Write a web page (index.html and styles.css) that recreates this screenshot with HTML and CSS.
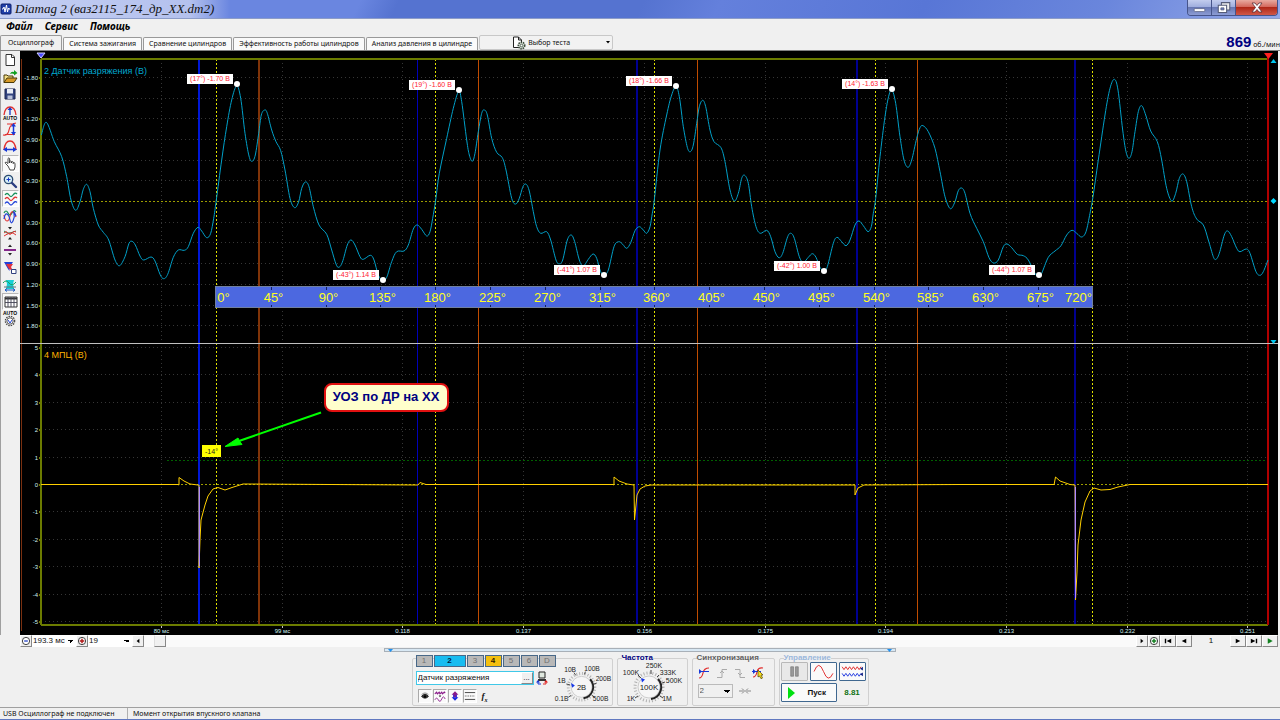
FILE: index.html
```html
<!DOCTYPE html>
<html lang="ru">
<head>
    <meta charset="UTF-8">
    <meta name="viewport" content="width=device-width, initial-scale=1.0">
    <title>Diamag 2</title>
    <link rel="stylesheet" href="styles.css">
</head>
<body>
<header class="titlebar">
    <svg class="app-icon" viewBox="0 0 12 12">
        <rect x="1" y="1" width="10" height="10" rx="1" fill="#1f3fa8" stroke="#0c1f6c"/>
        <path d="M2 6h1l1-2 1 5 1.500-7 1 7 1-4 .5 1h1" fill="none" stroke="#fff"/>
    </svg>
    <h1 class="title">Diamag 2 (ваз2115_174_др_ХХ.dm2)</h1>
    <div class="window-buttons">
        <button class="win-btn" aria-label="Свернуть"><svg viewBox="0 0 24 15"><rect x="6.500" y="9" width="11" height="3" rx="1" fill="#fff" stroke="#555c78" stroke-width=".7"/></svg></button>
        <button class="win-btn win-max" aria-label="Развернуть"><svg viewBox="0 0 22 15"><path d="M9 2.500h8v7h-8z" fill="#eee" stroke="#555c78"/><path d="M6 5h8v7H6z" fill="#fff" stroke="#555c78"/><path d="M8.500 7.500h3v2h-3z" fill="#6d7fc0" stroke="#555c78" stroke-width=".7"/></svg></button>
        <button class="win-btn win-close" aria-label="Закрыть"><svg viewBox="0 0 41 15"><path d="M16 3h3l2 2.500L23 3h3l-3.500 4.500L26 12h-3l-2-2.500L19 12h-3l3.500-4.500z" fill="#fff" stroke="#5a3038" stroke-width=".8"/></svg></button>
    </div>
</header>

<nav class="menubar">
    <a href="#">Файл</a>
    <a href="#">Сервис</a>
    <a href="#">Помощь</a>
</nav>

<div class="tabs">
    <button class="tab tab-active">Осциллограф</button>
    <button class="tab">Система зажигания</button>
    <button class="tab">Сравнение цилиндров</button>
    <button class="tab">Эффективность работы цилиндров</button>
    <button class="tab">Анализ давления в цилиндре</button>
    <button class="test-btn">
        <svg class="test-icon" viewBox="0 0 14 14">
            <path d="M1.500 1h5l3 3v7.500h-8z" fill="#fff" stroke="#222"/>
            <path d="M6.500 1v3h3" fill="none" stroke="#222"/>
            <circle cx="9.500" cy="9.500" r="3.200" fill="#d5e0d5" stroke="#3c4a3c" stroke-width="1.600" stroke-dasharray="1.500 .8"/>
            <circle cx="9.500" cy="9.500" r="1.300" fill="#fff" stroke="#3c4a3c" stroke-width=".8"/>
        </svg>
        <span>Выбор теста</span>
        <svg class="caret" viewBox="0 0 4 3"><path d="M0 0h4L2 2.500z"/></svg>
    </button>
    <p class="rpm"><strong>869</strong> об./мин</p>
</div>

<main class="workspace">
    <aside class="toolbar">
        <div class="tool-group">
            <button class="tool" aria-label="Новый"><svg viewBox="0 0 16 16"><path d="M4 2.500h6L12.500 5v8.500H4z" fill="#fff" stroke="#333"/><path d="M9.500 2.500v3h3" fill="none" stroke="#333"/></svg></button>
            <button class="tool" aria-label="Открыть"><svg viewBox="0 0 16 16"><path d="M2 13.500V6h3l1 1h5v2" fill="#f4e08a" stroke="#4a3a08"/><path d="M2 13.500L5 9h10l-3 4.500z" fill="#d79a28" stroke="#4a3a08"/><path d="M8 5q1-3 4-2V1l3.500 3L12 6.500V5q-2-1-4 0z" fill="#10a020"/></svg></button>
            <button class="tool" aria-label="Сохранить"><svg viewBox="0 0 16 16"><path d="M3 3h10v10H3z" fill="#31427e" stroke="#1a2450"/><path d="M5 3h6v4.500H5z" fill="#e8ecf5"/><path d="M5.500 9.500h5V13h-5z" fill="#b8c0d8"/></svg></button>
        </div>
        <div class="tool-group">
            <button class="tool" aria-label="Автомасштаб"><svg viewBox="0 0 16 16"><path d="M2 11Q3 3 8 3t6 8" fill="none" stroke="#e23030" stroke-width="1.300"/><path d="M8 5v6" stroke="#1838c8" stroke-width="1.300"/><path d="M5.500 6L8 3l2.500 3z" fill="#1838c8"/><text x="8" y="15.500" class="tiny-label">AUTO</text></svg></button>
            <button class="tool" aria-label="Масштаб по вертикали"><svg viewBox="0 0 16 16"><path d="M1 14q5 1 6-5t7-7M5 3h6M3 13.500h10" fill="none" stroke="#e23030" stroke-width="1.200"/><path d="M11.500 4v8" stroke="#1838d8" stroke-width="1.500"/><path d="M9 5.500L11.500 2 14 5.500zM9 11l2.500 3.500L14 11z" fill="#1838d8"/></svg></button>
            <button class="tool" aria-label="Масштаб по горизонтали"><svg viewBox="0 0 16 16"><path d="M2 12Q3 3 8 3t6 9" fill="none" stroke="#e23030" stroke-width="1.400"/><path d="M4 11.500h8" stroke="#1838d8" stroke-width="1.500"/><path d="M5 9l-4 2.500L5 14zM11 9l4 2.500-4 2.500z" fill="#1838d8"/></svg></button>
        </div>
        <div class="tool-group">
            <button class="tool tool-pressed" aria-label="Рука"><svg viewBox="0 0 16 16"><path d="M5 10L2.500 7.500q-1-1.500.7-1.300L5 7.500V2.500q.8-1.200 1.600 0V7V5.500q1-1 1.800 0V7V6q1-1 1.800 0v1.500V7q1-.8 1.800.3V11l-1 3H7z" fill="#fff" stroke="#333" stroke-width=".9"/></svg></button>
            <button class="tool" aria-label="Лупа"><svg viewBox="0 0 16 16"><circle cx="6.500" cy="6.500" r="4.200" fill="#d8f0f8" stroke="#2a4a70" stroke-width="1.300"/><path d="M6.500 4.500v4M4.500 6.500h4" stroke="#1838c8"/><path d="M10 10l4 4" stroke="#2a3d80" stroke-width="2.400" stroke-linecap="round"/></svg></button>
        </div>
        <div class="tool-group">
            <button class="tool tool-pressed" aria-label="Каналы раздельно"><svg viewBox="0 0 16 16" fill="none" stroke-width="1.300"><path d="M2 4q2-3 4 0t4 0 4-1" stroke="#16905a"/><path d="M2 8q2-3 4 0t4 0 4-1" stroke="#e03030"/><path d="M2 12.500q2-3 4 0t4 0 4-1" stroke="#2040d8"/></svg></button>
            <button class="tool" aria-label="Каналы вместе"><svg viewBox="0 0 16 16" fill="none" stroke-width="1.200"><path d="M2 5q2-4 4 0t4 0 4-1" stroke="#16905a"/><path d="M2 7q1 6 3 6t3-5 3-4 3 5" stroke="#e03030"/><path d="M2 11q1-6 3-5t3 6 3 1 1-8 2 3" stroke="#2040d8"/></svg></button>
            <button class="tool" aria-label="Сжать"><svg viewBox="0 0 16 16" fill="none"><path d="M2 6q3 3 6 2t6-2" stroke="#16905a"/><path d="M2 8q2-3 4 0t4 0 4-1M2 11q3-2 6-3t6 2" stroke="#e03030"/><path d="M6 2h4L8 4.500zM6 14.500h4L8 12z" fill="#222"/></svg></button>
            <button class="tool" aria-label="Разделить"><svg viewBox="0 0 16 16"><path d="M2 8h12" stroke="#86288c" stroke-width="2"/><path d="M6 5h4L8 2.500zM6 11h4L8 13.500z" fill="#222"/></svg></button>
        </div>
        <div class="tool-group">
            <button class="tool" aria-label="Фильтр"><svg viewBox="0 0 16 16"><path d="M2 2h9L7.500 7v4L6 9z" fill="#2040d8"/><path d="M4 4l7 0-2 3 2 4-4-2z" fill="#e03040"/><path d="M9.500 9.500h4.500v4H9.500z" fill="#fff" stroke="#304080"/></svg></button>
            <button class="tool" aria-label="Слои"><svg viewBox="0 0 16 16"><path d="M4 3h8l-1 4 1 5H4l1-5z" fill="#18cfd6"/><path d="M1 6q3-4 6 0t7-1" fill="none" stroke="#16a060"/><path d="M2 10h12" stroke="#607878"/><path d="M3 13h10M5 11.500L3 13l2 1.500M11 11.500l2 1.500-2 1.500" fill="none" stroke="#1858c0"/></svg></button>
            <button class="tool tool-pressed" aria-label="Таблица"><svg viewBox="0 0 16 16"><path d="M2 3h12v10H2z" fill="#fff" stroke="#333"/><path d="M2 4.500h12" stroke="#333" stroke-width="2"/><path d="M5 3v10M8 3v10M11 3v10M2 8.500h12" stroke="#445" stroke-width=".9"/></svg></button>
            <button class="tool" aria-label="Автонастройка"><svg viewBox="0 0 16 16"><text x="8" y="4" class="tiny-label">AUTO</text><circle cx="8" cy="10" r="4.700" fill="none" stroke="#444" stroke-width="1.200" stroke-dasharray="1.500 1"/><circle cx="8" cy="10" r="3.200" fill="#fff" stroke="#555"/><path d="M6 9l2 3 2-3" fill="none" stroke="#2040d8"/></svg></button>
        </div>
    </aside>
    <svg class="scope" id="scope" viewBox="20 51 1258 584" role="img" aria-label="Осциллограмма"></svg>
</main>

<div class="timebar">
    <button class="bar-btn" aria-label="Уменьшить"><svg viewBox="0 0 11 11"><circle cx="5.500" cy="5.500" r="4" fill="#fff" stroke="#333"/><path d="M3.500 5.500h4" stroke="#1030c0" stroke-width="1.300"/></svg></button>
    <select class="bar-select" aria-label="Развёртка"><option>193.3 мс</option></select>
    <button class="bar-btn" aria-label="Увеличить"><svg viewBox="0 0 11 11"><circle cx="5.500" cy="5.500" r="4" fill="#fff" stroke="#333"/><path d="M3 5.500h5M5.500 3v5" stroke="#b01818" stroke-width="1.600"/></svg></button>
    <select class="bar-select" aria-label="Деление"><option>19</option></select>
    <button class="bar-btn" aria-label="Влево"><svg viewBox="0 0 11 11"><path d="M7 3v5L4 5.500z"/></svg></button>
    <input class="bar-slider" type="range" min="0" max="100" value="1" aria-label="Позиция">
    <button class="bar-btn" aria-label="Вправо"><svg viewBox="0 0 11 11"><path d="M4 3v5l3-2.500z"/></svg></button>
    <button class="bar-btn" aria-label="Добавить кадр"><svg viewBox="0 0 11 11"><circle cx="5.500" cy="5.500" r="4" fill="#fff" stroke="#333"/><path d="M3 5.500h5M5.500 3v5" stroke="#128020" stroke-width="1.600"/></svg></button>
    <button class="bar-btn bar-wide" aria-label="Первый кадр"><svg viewBox="0 0 11 11"><path d="M2 3h1.500v5H2zM9 3v5L4 5.500z"/></svg></button>
    <button class="bar-btn bar-wide" aria-label="Предыдущий кадр"><svg viewBox="0 0 11 11"><path d="M8 3v5L3 5.500z"/></svg></button>
    <output class="frame-no">1</output>
    <button class="bar-btn bar-wide" aria-label="Следующий кадр"><svg viewBox="0 0 11 11"><path d="M3 3v5l5-2.500z"/></svg></button>
    <button class="bar-btn bar-wide" aria-label="Последний кадр"><svg viewBox="0 0 11 11"><path d="M7.500 3H9v5H7.500zM2 3v5l5-2.500z"/></svg></button>
    <button class="bar-btn bar-wide" aria-label="Воспроизвести"><svg viewBox="0 0 11 11"><path d="M3 2.500v6l5.500-3z" fill="#128020"/></svg></button>
</div>

<footer class="controls">
    <div class="splitter">
        <svg viewBox="0 0 5 3"><path d="M0 0h5L2.500 3z"/></svg>
        <svg viewBox="0 0 5 3"><path d="M0 0h5L2.500 3z"/></svg>
    </div>
    <div class="panels">
        <section class="channel" aria-label="Канал">
            <div class="channel-left">
                <div class="channel-tabs">
                    <button class="ch">1</button>
                    <button class="ch ch-cyan">2</button>
                    <button class="ch">3</button>
                    <button class="ch ch-yellow">4</button>
                    <button class="ch">5</button>
                    <button class="ch">6</button>
                    <button class="ch">D</button>
                </div>
                <div class="sensor-row">
                    <div class="sensor">
                        <input class="sensor-name" type="text" value="Датчик разряжения" aria-label="Датчик">
                        <button class="sensor-more" aria-label="Выбрать датчик">...</button>
                    </div>
                    <svg class="sensor-icon" viewBox="0 0 12 14"><path d="M3 1h6v6H3z" fill="#dfe8df" stroke="#222"/><path d="M2 8h8v2H2z" fill="#333"/><path d="M5 13H2v-2.500" fill="none" stroke="#1838d8"/><path d="M0 11.500L2 9l2 2.500z" fill="#1838d8"/><path d="M7 13h3v-2.500" fill="none" stroke="#e02020"/><path d="M8 11.500L10 9l2 2.500z" fill="#e02020"/></svg>
                </div>
                <div class="view-row">
                    <button class="view-btn" aria-label="Видимость"><svg viewBox="0 0 14 13"><path d="M3 7q4-5 8 0-4 4-8 0z" fill="#444" stroke="#111"/><circle cx="7" cy="7" r="1.500"/><path d="M3 5q4-4 8 0" fill="none" stroke="#777"/></svg></button>
                    <button class="view-btn" aria-label="Фильтр"><svg viewBox="0 0 14 13" fill="none" stroke="#8a1a8a"><path d="M1 4l2-2 1 2 2-2 1 2 2-2 1 2 2-2 1 1" stroke-width="1.300"/><path d="M1 11q2-4 4 0t4-1 4 0"/><path d="M5.500 6h3L7 8z" fill="#222" stroke="none"/></svg></button>
                    <button class="view-btn" aria-label="Инверсия"><svg viewBox="0 0 14 13"><path d="M3 5l4-4 4 4H9v3H5V5z" fill="#8a1a8a"/><path d="M3 8h2V5h1v3h2V5h1v3h2l-4 4z" fill="#1828e0"/></svg></button>
                    <button class="view-btn" aria-label="Линии"><svg viewBox="0 0 14 13" stroke="#333"><path d="M1 2.500h12M1 10.500h12"/><path d="M1 6.500h12" stroke-dasharray="1 1"/></svg></button>
                    <button class="view-btn view-flat" aria-label="Формула"><em>f<sub>x</sub></em></button>
                </div>
            </div>
            <svg class="knob" viewBox="552 663 62 44">
                <circle cx="582" cy="688" r="14" class="knob-ring"/>
                <circle cx="582" cy="688" r="11" class="knob-face"/>
                <path d="M591 680a12 12 0 0 1-7 20" class="knob-shade"/>
                <path d="M566 685l4 1M574 673l2 3M586 672l-1 3M598 684l-3 1M571 697l-3 2M593 697l3 2" class="knob-tick"/>
                <path d="M571 684l4 2.500-3 2.500z" fill="#1838e8"/>
                <text x="582" y="691" class="knob-value">2В</text>
                <text x="570" y="672">10В</text><text x="593" y="671">100В</text>
                <text x="561" y="684">1В</text><text x="605" y="682">200В</text>
                <text x="561" y="703">0.1В</text><text x="602" y="703">500В</text>
            </svg>
        </section>

        <fieldset class="panel panel-freq">
            <legend>Частота</legend>
            <svg class="knob" viewBox="619 663 68 44">
                <circle cx="650" cy="688" r="14" class="knob-ring"/>
                <circle cx="650" cy="688" r="11" class="knob-face"/>
                <path d="M659 680a12 12 0 0 1-7 20" class="knob-shade"/>
                <path d="M639 676l3 3M652 671v4M660 676l-2 2M666 683l-3 1M639 697l-3 2M661 697l3 2" class="knob-tick"/>
                <path d="M642 679l4 1.500-3 3z" fill="#1838e8"/>
                <text x="650" y="691" class="knob-value">100K</text>
                <text x="655" y="669">250K</text><text x="632" y="676">100K</text>
                <text x="669" y="676">333K</text><text x="675" y="684">500K</text>
                <text x="632" y="702">1K</text><text x="668" y="702">1M</text>
            </svg>
        </fieldset>

        <fieldset class="panel panel-sync">
            <legend>Синхронизация</legend>
            <div class="sync-row">
                <button class="sync-btn" aria-label="Уровень"><svg viewBox="0 0 12 12" fill="none"><path d="M1 11q3 0 4-5t6-5" stroke="#e02828" stroke-width="1.200"/><path d="M1 4.500h10" stroke="#1838d8"/><path d="M1 2v5l3-2.500z" fill="#1838d8"/></svg></button>
                <button class="sync-btn" aria-label="По фронту"><svg viewBox="0 0 12 12" fill="none" stroke="#aaa"><path d="M1 10.500h5v-8h5M4 6l2-2 2 2"/></svg></button>
                <button class="sync-btn" aria-label="По спаду"><svg viewBox="0 0 12 12" fill="none" stroke="#aaa"><path d="M1 2.500h5v8h5M4 6l2 2 2-2"/></svg></button>
                <button class="sync-btn" aria-label="Вручную"><svg viewBox="0 0 12 12" fill="none"><path d="M1 10q3 0 4-5t6-4" stroke="#e02828" stroke-width="1.200"/><path d="M0 4.500h9" stroke="#1838d8"/><path d="M1 2v5l3-2.500z" fill="#1838d8"/><path d="M6 3l5 5H9l1.500 3-1.500.7L7.500 9 6 10z" fill="#f8e020" stroke="#554400" stroke-width=".7"/></svg></button>
            </div>
            <div class="sync-row">
                <select class="sync-select" aria-label="Канал синхронизации"><option>2</option></select>
                <svg class="sync-arrows" viewBox="0 0 12 8"><path d="M0 4h4M12 4H8M3 1.500L5.500 4 3 6.500M9 1.500L6.500 4 9 6.500" fill="none" stroke="#888"/></svg>
            </div>
        </fieldset>

        <fieldset class="panel panel-run">
            <legend>Управление</legend>
            <div class="run-grid">
                <button class="run-btn run-off" aria-label="Пауза"><svg viewBox="0 0 26 18"><path d="M9 4h3v10H9zM14 4h3v10h-3z" fill="#999" stroke="#777" stroke-width=".7"/></svg></button>
                <button class="run-btn" aria-label="Синус"><svg viewBox="0 0 26 18"><path d="M3 9Q8-4 13 9t10 2" fill="none" stroke="#e02828"/></svg></button>
                <button class="run-btn" aria-label="Запись"><svg viewBox="0 0 26 18" fill="none"><path d="M2 4l2 3 2-3 2 3 2-3 2 3 2-3 2 3 2-3 2 3 2-3" stroke="#e02828"/><path d="M2 11l2 3 2-3 2 3 2-3 2 3 2-3 2 3 2-3 2 3 2-3" stroke="#2038e0"/><path d="M24 4v4l-3-2zM24 10v4l-3-2z" fill="#102080"/></svg></button>
                <button class="run-btn run-start"><svg class="play" viewBox="0 0 8 12"><path d="M0 0l7 6-7 6z"/></svg>Пуск</button>
                <output class="run-value">8.81</output>
            </div>
        </fieldset>
    </div>
</footer>

<div class="statusbar">
    <span class="status-cell status-device">USB Осциллограф не подключен</span>
    <span class="status-cell status-hint">Момент открытия впускного клапана</span>
</div>

<script src="scope.js"></script>
</body>
</html>
```
FILE: styles.css
```css
:root {
    --face: #f0f0f0;
    --edge: #a0a0a0;
    --navy: #000080;
    --cyan: #00a8d0;
    --arial: "Liberation Sans", Arial, sans-serif;
}

* {
    margin: 0;
    padding: 0;
    box-sizing: border-box;
}

body {
    display: flex;
    flex-direction: column;
    min-height: 100vh;
    overflow-x: hidden;
    background: var(--face);
    color: #111;
    font: 7px/10px "Noto Sans", "Open Sans", sans-serif;
}

button,
input,
select {
    font: inherit;
    color: inherit;
}

svg {
    display: block;
    font-family: var(--arial);
}

/* Title bar */
.titlebar {
    display: flex;
    align-items: center;
    height: 19px;
    padding-right: 2px;
    border-bottom: 1px solid #8c9cc8;
    background:
        linear-gradient(90deg, #c4cff2 0, #b4c1ee 190px, transparent 230px),
        linear-gradient(115deg, #6a86e0 0, #6a86e0 28%, #5573d0 31%, #5573d0 50%, #6480dc 56%, #5876d6 72%, #6a86dc 86%, #93a7e8 100%);
}

.app-icon {
    width: 12px;
    height: 12px;
}

.title {
    flex: 1;
    padding-left: 3px;
    font: italic 13px/18px "Liberation Serif", serif;
    white-space: nowrap;
}

.window-buttons {
    display: flex;
    align-self: flex-start;
    border: 1px solid #46548a;
    border-top: 0;
    border-radius: 0 0 4px 4px;
    overflow: hidden;
}

.win-btn {
    width: 24px;
    height: 15px;
    border: 0;
    border-right: 1px solid #46548a;
    background: linear-gradient(#c3cdee 0, #a0aede 45%, #6878b4 50%, #8c9cd4 100%);
}

.win-close {
    width: 41px;
    border-right: 0;
    background: linear-gradient(#e8aaa0 0, #d4685c 45%, #b02818 50%, #d05848 100%);
}

/* Menu and tabs */
.menubar {
    display: flex;
    gap: 12px;
    height: 16px;
    padding-left: 6px;
    font: italic bold 10px/15px "Noto Sans", sans-serif;
}

.menubar a {
    color: #000;
    text-decoration: none;
}

.tabs {
    display: flex;
    align-items: flex-end;
    gap: 1px;
    height: 16px;
    border-bottom: 1px solid #808080;
}

.tab {
    height: 13px;
    padding: 0 5px;
    border: 1px solid #999;
    border-bottom: 0;
    border-radius: 2px 2px 0 0;
    background: #fafafa;
    white-space: nowrap;
}

.tab-active {
    height: 15px;
    padding: 0 7px;
    background: var(--face);
}

.test-btn {
    display: flex;
    align-items: center;
    width: 134px;
    height: 15px;
    padding: 0 2px 0 32px;
    border: 1px solid #c8c8c8;
    border-radius: 2px;
    background: #f2f2f2;
}

.test-icon {
    width: 14px;
    height: 14px;
    margin-right: 2px;
}

.caret {
    width: 4px;
    height: 3px;
    margin-left: auto;
}

.rpm {
    flex: 1;
    align-self: center;
    text-align: right;
    line-height: 15px;
    white-space: nowrap;
}

.rpm strong {
    color: var(--navy);
    font-family: var(--arial);
    font-size: 15px;
}

/* Oscilloscope */
.workspace {
    display: flex;
    padding-right: 2px;
}

.toolbar {
    display: flex;
    flex-direction: column;
    gap: 1px;
    width: 20px;
    padding-left: 1px;
    border-left: 1px solid var(--edge);
}

.tool {
    display: block;
    width: 17px;
    height: 17px;
    border: 0;
    background: none;
}

.tool svg {
    width: 16px;
    height: 16px;
}

.tool-pressed {
    border: 1px solid #b8b8b8;
    border-right-color: #fff;
    border-bottom-color: #fff;
    background: #f9f9f9;
}

.tiny-label {
    font-size: 5px;
    font-weight: bold;
    text-anchor: middle;
}

.scope {
    flex: 1;
    min-width: 0;
    background: #000;
}

.scope line,
.scope rect {
    shape-rendering: crispEdges;
}

.scope path {
    fill: none;
}

.grid {
    stroke: #363636;
    stroke-dasharray: 1 3;
}

.zero {
    stroke: #9c9c00;
    stroke-dasharray: 2 2;
}

.level {
    stroke: #006000;
    stroke-dasharray: 2 2;
}

.frame {
    stroke: #6c7c00;
    stroke-width: 2;
}

.divider {
    stroke: #c0c0c0;
}

.edge {
    stroke: #7a3010;
}

.spark {
    stroke: #0000b8;
}

.spark-wide {
    stroke: #000090;
    stroke-width: 2;
}

.spark-main {
    stroke: #0018d8;
    stroke-width: 2;
}

.tdc {
    stroke: #e0e000;
    stroke-dasharray: 2 2;
}

.valve {
    stroke: #c04c00;
}

.valve-wide {
    stroke: #803408;
    stroke-width: 2;
}

.end-cursor {
    stroke: #b00000;
    stroke-width: 2;
}

.axis text {
    fill: #d0f0f0;
    font-size: 6px;
}

.scope .wave-vacuum {
    stroke: #00a0c8;
}

.scope .wave-spark {
    stroke: #ffd000;
}

.wave-fall {
    stroke: #b088ff;
}

.wave-title {
    font-size: 9px;
}

.wave-title-2 {
    fill: var(--cyan);
}

.wave-title-4 {
    fill: #ffb000;
}

.ruler-bar {
    fill: #4c68e0;
    stroke: #7080a0;
}

.ruler text {
    fill: #ffff20;
    font-size: 13px;
    text-anchor: middle;
}

.ruler line {
    stroke: #102060;
}

.peak rect,
.peak circle {
    fill: #fff;
}

.peak text {
    fill: #ff2030;
    font-size: 7px;
    text-anchor: middle;
}

.angle rect {
    fill: #ffff00;
}

.angle text {
    fill: #222;
    font-size: 7px;
    text-anchor: middle;
}

.scope .callout-box {
    fill: #ffffcc;
    stroke: #e01010;
    stroke-width: 2;
    shape-rendering: auto;
}

.callout-text {
    fill: var(--navy);
    font-size: 13px;
    font-weight: bold;
    text-anchor: middle;
}

.scope .arrow {
    fill: #00ff00;
    stroke: #00ff00;
}

/* Time bar under the scope */
.timebar {
    display: flex;
    align-items: center;
    height: 12px;
    padding: 0 2px 0 20px;
    font: 8px/10px var(--arial);
}

.bar-btn {
    width: 12px;
    height: 12px;
    border: 1px solid;
    border-color: #fff #888 #888 #fff;
    background: var(--face);
}

.bar-btn svg {
    width: 100%;
    height: 10px;
}

.bar-wide {
    width: 16px;
}

.bar-select,
.sync-select {
    appearance: none;
    width: 44px;
    height: 12px;
    padding-left: 1px;
    border: 0;
    border-radius: 0;
    background:
        linear-gradient(45deg, transparent 50%, #000 50%) right 5px center / 3px 3px no-repeat,
        linear-gradient(-45deg, transparent 50%, #000 50%) right 2px center / 3px 3px no-repeat,
        #fff;
}

.bar-slider {
    appearance: none;
    flex: 1;
    min-width: 0;
    height: 12px;
    background: #fafafa;
}

.bar-slider::-webkit-slider-thumb {
    appearance: none;
    width: 12px;
    height: 12px;
    border: 1px solid;
    border-color: #fff #888 #888 #ddd;
    background: var(--face);
}

.frame-no {
    width: 38px;
    text-align: center;
}

/* Bottom controls */
.controls {
    flex: 1;
    display: flex;
    flex-direction: column;
    align-items: center;
    padding-top: 1px;
    border-bottom: 1px solid var(--edge);
}

.splitter {
    display: flex;
    justify-content: space-between;
    width: 40%;
    height: 4px;
    padding: 0 3px;
    border: 1px solid #a8b0b8;
    background: #d8e8f4;
}

.splitter svg {
    width: 5px;
    height: 3px;
    fill: #2090f0;
}

.panels {
    display: flex;
    gap: 4px;
    padding-top: 2px;
    font: 8px/10px var(--arial);
}

.panel,
.channel {
    height: 52px;
    border: 1px solid #d0d0d0;
    border-radius: 2px;
}

.panel legend {
    margin-left: 4px;
    font-weight: bold;
    line-height: 8px;
}

.channel {
    display: flex;
    width: 201px;
    height: 48px;
    margin-top: 4px;
    padding-left: 3px;
}

.channel-left {
    display: flex;
    flex-direction: column;
    gap: 4px;
    width: 137px;
    margin-top: -4px;
}

.channel-tabs {
    display: flex;
    gap: 1px;
    width: 140px;
}

.ch {
    flex: 1;
    height: 12px;
    border: 1px solid #486888;
    background: #b8b8b8;
    color: #707070;
    line-height: 8px;
}

.ch-cyan {
    flex: 2;
    background: #18bcf0;
    color: #002040;
    font-weight: bold;
}

.ch-yellow {
    background: #f4c010;
    color: #302000;
    font-weight: bold;
}

.sensor-row {
    display: flex;
    align-items: center;
    gap: 2px;
}

.sensor {
    display: flex;
    width: 118px;
    height: 14px;
    border: 1px solid #40c8e8;
    background: #fff;
}

.sensor-name {
    flex: 1;
    min-width: 0;
    padding-left: 1px;
    border: 0;
}

.sensor-more {
    width: 12px;
    border: 1px solid;
    border-color: #fff #888 #888 #fff;
    background: var(--face);
    line-height: 6px;
}

.sensor-icon {
    width: 12px;
    height: 14px;
}

.view-row {
    display: flex;
    gap: 1px;
    padding-left: 2px;
}

.view-btn {
    width: 14px;
    height: 14px;
    border: 1px solid;
    border-color: #aaa #fff #fff #aaa;
    background: #fafafa;
}

.view-btn svg {
    width: 12px;
    height: 12px;
}

.view-flat {
    border: 0;
    background: none;
    font: bold 9px/12px "Liberation Serif", serif;
}

.view-flat sub {
    font-size: 6px;
    line-height: 6px;
}

.knob {
    width: 62px;
    height: 44px;
    margin-top: 3px;
}

.knob text {
    fill: #222;
    font-size: 7px;
    text-anchor: middle;
}

.knob .knob-value {
    font-size: 8px;
}

.knob-ring {
    fill: none;
    stroke: #b0b0b0;
    stroke-width: 3;
    stroke-dasharray: 1 2;
}

.knob-face {
    fill: #f6f6f6;
    stroke: #ccc;
}

.knob-shade {
    fill: none;
    stroke: #222;
    stroke-width: 2;
}

.knob-tick {
    stroke: #444;
}

.panel-freq {
    width: 71px;
}

.panel-freq legend {
    color: var(--navy);
}

.panel-freq .knob {
    width: 68px;
    margin-top: 0;
}

.panel-sync {
    width: 83px;
}

.panel-sync legend {
    color: #606060;
}

.sync-row {
    display: flex;
    align-items: center;
    gap: 6px;
    padding: 4px 0 0 5px;
}

.sync-btn {
    width: 12px;
    height: 14px;
    border: 0;
    background: none;
}

.sync-btn svg {
    width: 12px;
    height: 12px;
}

.sync-select {
    width: 35px;
    height: 14px;
    border: 1px solid #bbb;
    background-color: var(--face);
    color: #555;
}

.sync-arrows {
    width: 12px;
    height: 8px;
}

.panel-run {
    width: 90px;
}

.panel-run legend {
    color: #9cb8dc;
}

.run-grid {
    display: grid;
    grid-template-columns: repeat(3, 1fr);
    gap: 2px;
    padding: 0 2px 0 1px;
}

.run-btn {
    height: 19px;
    border: 1px solid #406890;
    border-radius: 1px;
    background: #fafafa;
}

.run-btn svg {
    width: 100%;
    height: 17px;
}

.run-off {
    border-color: #b8b8b8;
    background: #e8e8e8;
}

.run-start {
    display: flex;
    align-items: center;
    grid-column: span 2;
    gap: 12px;
    padding-left: 6px;
    font-weight: bold;
}

.run-btn .play {
    width: 8px;
    height: 12px;
    fill: #00e010;
}

.run-value {
    align-self: center;
    justify-self: center;
    color: #107010;
    font-weight: bold;
}

/* Status bar */
.statusbar {
    display: flex;
    gap: 2px;
    height: 12px;
    border-bottom: 1px solid #6078c0;
}

.status-cell {
    padding-left: 3px;
    line-height: 11px;
    white-space: nowrap;
}

.status-device {
    width: 128px;
    border-right: 1px solid #b0b0b0;
}

.status-hint {
    flex: 1;
}
```
FILE: scope.js
```javascript
const NS = 'http://www.w3.org/2000/svg';
const scope = document.getElementById('scope');

const LEFT = 41, RIGHT = 1268, TOP = 59, BOTTOM = 625, MIDDLE = 343;
const DEG_STEP = 54.8;

function add(parent, tag, attrs, text) {
    const el = document.createElementNS(NS, tag);
    for (const key in attrs) {
        el.setAttribute(key, attrs[key]);
    }
    if (text !== undefined) {
        el.textContent = text;
    }
    parent.appendChild(el);
    return el;
}

function group(cls) {
    return add(scope, 'g', { class: cls });
}

function hline(parent, y, cls, x1 = LEFT, x2 = RIGHT) {
    add(parent, 'line', { x1, x2, y1: y, y2: y, class: cls });
}

function vline(parent, x, cls, y1 = TOP, y2 = BOTTOM) {
    add(parent, 'line', { x1: x, x2: x, y1, y2, class: cls });
}

// Catmull-Rom spline through the samples
function smoothPath(p) {
    let d = `M${p[0][0]} ${p[0][1]}`;
    for (let i = 0; i < p.length - 1; i++) {
        const a = p[i - 1] || p[i], b = p[i], c = p[i + 1], e = p[i + 2] || c;
        const c1 = [b[0] + (c[0] - a[0]) / 6, b[1] + (c[1] - a[1]) / 6];
        const c2 = [c[0] - (e[0] - b[0]) / 6, c[1] - (e[1] - b[1]) / 6];
        d += `C${[...c1, ...c2, ...c].map(v => v.toFixed(1)).join(' ')}`;
    }
    return d;
}

// Vacuum sensor samples, three units per pixel
const blocks = [
    { start: 0, samples: [34,225, 49,187, 73,245, 95,290, 110,350, 123,420, 137,451, 150,425, 160,388, 170,373, 180,395, 190,445, 205,495, 220,517, 236,540, 255,600, 269,617, 285,590, 297,550, 306,544, 316,555, 330,588, 341,600, 363,591, 375,603, 390,643, 401,656, 413,643, 430,592, 445,570, 463,571, 475,560, 490,520, 504,502, 515,513, 530,533, 542,520, 551,475, 559,420, 575,300, 590,200, 605,120, 620,78, 632,115, 645,220, 657,288, 666,304, 676,285, 686,220, 694,165, 704,150, 712,160, 725,210, 738,245, 752,272, 765,330, 780,415, 794,443, 806,425, 815,385, 826,366, 837,380, 850,440, 867,495, 890,523, 905,570, 918,612, 926,622, 937,607, 952,555, 963,540, 975,555, 990,590, 1000,598, 1021,586, 1032,600, 1045,645, 1058,662, 1070,652, 1085,605, 1100,575, 1122,573, 1135,555, 1150,507, 1162,495, 1175,508, 1190,528, 1200,515, 1208,475] },
    { start: 1200, samples: [17,420, 28,340, 50,235, 70,145, 86,94, 95,125, 110,240, 118,285, 127,304, 135,280, 145,215, 155,160, 163,150, 172,165, 185,235, 200,277, 217,293, 228,330, 245,415, 257,432, 268,415, 278,382, 287,372, 297,390, 310,455, 320,500, 332,520, 350,515, 362,540, 378,600, 388,611, 398,600, 412,540, 424,525, 434,545, 448,600, 460,618, 475,598, 489,582, 500,595, 512,635, 522,645, 535,630, 552,560, 566,545, 578,553, 590,565, 602,548, 615,512, 628,500, 640,510, 650,520, 660,500, 667,460, 673,420, 690,270, 710,165, 725,105, 738,80, 748,110, 760,200, 772,262, 781,275, 790,255, 800,190, 808,140, 818,121, 827,140, 840,210, 852,245, 873,263, 885,305, 900,390, 913,423, 925,400, 935,355, 944,346, 955,370, 965,440, 978,500, 991,520, 1010,511, 1022,530, 1035,575, 1047,593, 1058,580, 1073,530, 1083,520, 1093,535, 1108,590, 1120,607, 1135,592, 1147,581, 1158,592, 1170,622, 1182,633, 1192,620, 1210,550, 1221,532, 1235,545] },
    { start: 2430, samples: [18,557, 30,540, 45,495, 57,483, 70,497, 84,515, 94,500, 100,460, 107,415, 120,290, 135,170, 147,105, 156,90, 167,130, 180,230, 192,300, 204,322, 215,300, 230,235, 240,203, 249,197, 265,215, 285,265, 300,335, 315,410, 331,446, 345,425, 355,392, 365,384, 375,400, 390,460, 410,505, 430,545, 447,593, 461,609, 475,600, 490,560, 501,552, 515,563, 532,583, 550,587, 565,600, 585,640, 597,650, 605,640, 625,592, 645,573, 663,557, 680,525, 696,511, 710,520, 725,531, 738,515, 750,460, 759,410, 775,300, 795,165, 810,85, 823,58, 834,90, 848,210, 858,275, 867,295, 876,275, 885,215, 895,155, 905,137, 917,165, 932,213, 952,245, 965,300, 980,385, 995,423, 1007,400, 1018,355, 1029,342, 1040,365, 1055,440, 1070,477, 1090,495, 1105,540, 1120,590, 1128,598, 1138,580, 1153,525, 1163,513, 1175,530, 1190,565, 1200,575, 1219,567, 1230,580, 1248,635, 1260,646, 1270,635, 1284,600] }
];

const vacuum = [];
blocks.forEach(({ start, samples }) => {
    for (let i = 0; i < samples.length; i += 2) {
        vacuum.push([30 + (start + samples[i]) / 3, 60 + samples[i + 1] / 3]);
    }
});

// Interference pulse of the coil, straight segments
const spark = 'M41 484.500H178L179 485V477.500L184 481 190 484 198 485 199 485V568L200 540 201 520 205 505 208 496 213 489 218 487.500 225 490 232 487.500 243 484 330 484.500 418 485 420 482.500 426 484.500H613L614 485V477L619 481 627 484 634 485 634.500 520 636 505 637 495 640 489 645 486 651 485H855V495L858 488 864 485 960 484.500H1054V485L1055.500 477 1060 481 1070 484.500 1075 485 1075.500 600 1077 572 1078 545 1081 520 1085 502 1090 491 1094 488 1101 490 1110 489.500 1118 487 1130 484.500H1268';

// Grid and axes
const grid = group('grid-lines');
const axis = group('axis');
const times = ['80 мс', '99 мс', '0.118', '0.137', '0.156', '0.175', '0.194', '0.213', '0.232', '0.251'];
times.forEach((label, i) => {
    const x = 161.500 + Math.round(i * 120.700);
    vline(grid, x, 'grid');
    vline(grid, x, 'divider', BOTTOM, BOTTOM + 3);
    add(axis, 'text', { x, y: 633, 'text-anchor': 'middle' }, label);
});
for (let i = -6; i <= 6; i++) {
    const y = 201.500 + Math.round(i * 20.700);
    hline(grid, y, i ? 'grid' : 'zero');
    hline(grid, y, 'frame', 39, 41);
    add(axis, 'text', { x: 38, y: y + 2, 'text-anchor': 'end' }, i ? (i * 0.3).toFixed(2) : '0');
}
for (let i = -5; i <= 5; i++) {
    const y = 484.500 - Math.round(i * 27.400);
    hline(grid, y, i ? 'grid' : 'zero');
    hline(grid, y, 'frame', 39, 41);
    add(axis, 'text', { x: 38, y: y + 2, 'text-anchor': 'end' }, i);
}
hline(grid, 460.500, 'level', 167);

// Cursors
const cursors = group('cursors');
vline(cursors, 21.500, 'edge', 59, 631);
vline(cursors, 199, 'spark-main');
vline(cursors, 417.500, 'spark');
[637, 857, 1075].forEach(x => vline(cursors, x, 'spark-wide'));
vline(cursors, 259, 'valve-wide');
[478.500, 697.500, 917.500].forEach(x => vline(cursors, x, 'valve'));
[216.500, 435.500, 654.500, 875.500, 1092.500].forEach(x => vline(cursors, x, 'tdc'));
hline(cursors, 59, 'frame', LEFT);
hline(cursors, BOTTOM, 'frame', LEFT);
vline(cursors, LEFT, 'frame');
vline(cursors, RIGHT, 'end-cursor', 54);
hline(cursors, MIDDLE + 0.5, 'divider', 20, 1278);
add(cursors, 'polygon', { points: '37,53 45,53 41,58', fill: '#4848ff', stroke: '#d0d0ff' });
add(cursors, 'polygon', { points: '1264,53 1273,53 1268.500,59', fill: '#ff2020' });
add(cursors, 'polygon', { points: '1273.500,59 1276.500,63 1270.500,63', fill: '#00c8f0' });
add(cursors, 'polygon', { points: '1273.500,198 1276.500,201 1273.500,204 1270.500,201', fill: '#00d8ff' });
add(cursors, 'polygon', { points: '1270.500,340 1276.500,340 1273.500,344', fill: '#00c8f0' });

// Waves
const waves = group('waves');
add(waves, 'path', { d: smoothPath(vacuum), class: 'wave-vacuum' });
add(waves, 'path', { d: spark, class: 'wave-spark' });
vline(waves, 199.500, 'wave-fall', 487, 566);
vline(waves, 1075.500, 'wave-fall', 487, 598);
add(waves, 'text', { x: 44, y: 74, class: 'wave-title wave-title-2' }, '2 Датчик разряжения (В)');
add(waves, 'text', { x: 44, y: 358, class: 'wave-title wave-title-4' }, '4 МПЦ (В)');

// Crank angle ruler
const ruler = group('ruler');
add(ruler, 'rect', { x: 215.500, y: 286.500, width: 877, height: 21, class: 'ruler-bar' });
for (let i = 0; i <= 16; i++) {
    const x = Math.round(216 + i * DEG_STEP) + 0.5;
    if (i && i < 16) {
        vline(ruler, x, '', 287, 290);
        vline(ruler, x, '', 305, 307);
    }
    const shift = i === 0 ? 7 : i === 16 ? -15 : 2;
    add(ruler, 'text', { x: x + shift, y: 302 }, `${i * 45}°`);
}

// Peak labels sit to the upper left of their point
const peaks = [
    [237, 84, '(17°) -1.70 В'], [459, 90, '(19°) -1.60 В'],
    [676, 86, '(18°) -1.66 В'], [892, 89, '(14°) -1.63 В'],
    [383, 280, '(-43°) 1.14 В'], [604, 275, '(-41°) 1.07 В'],
    [824, 271, '(-42°) 1.00 В'], [1039, 275, '(-44°) 1.07 В']
];
peaks.forEach(([x, y, label]) => {
    const peak = group('peak');
    add(peak, 'rect', { x: x - 50, y: y - 10, width: 46, height: 10 });
    add(peak, 'text', { x: x - 27, y: y - 3 }, label);
    add(peak, 'circle', { cx: x, cy: y, r: 3 });
});

// Ignition advance note
const note = group('angle');
add(note, 'rect', { x: 202, y: 445, width: 19, height: 12 });
add(note, 'text', { x: 211.500, y: 454 }, '-14°');
add(note, 'path', { d: 'M321 412.500L239 441', class: 'arrow', 'stroke-width': 2 });
add(note, 'path', { d: 'M225 446.500L238 438 239.500 441 242 444.500z', class: 'arrow' });
const callout = group('callout');
add(callout, 'rect', { x: 325, y: 384, width: 123, height: 27, rx: 7, class: 'callout-box' });
add(callout, 'text', { x: 386, y: 401, class: 'callout-text' }, 'УОЗ по ДР на ХХ');
```
